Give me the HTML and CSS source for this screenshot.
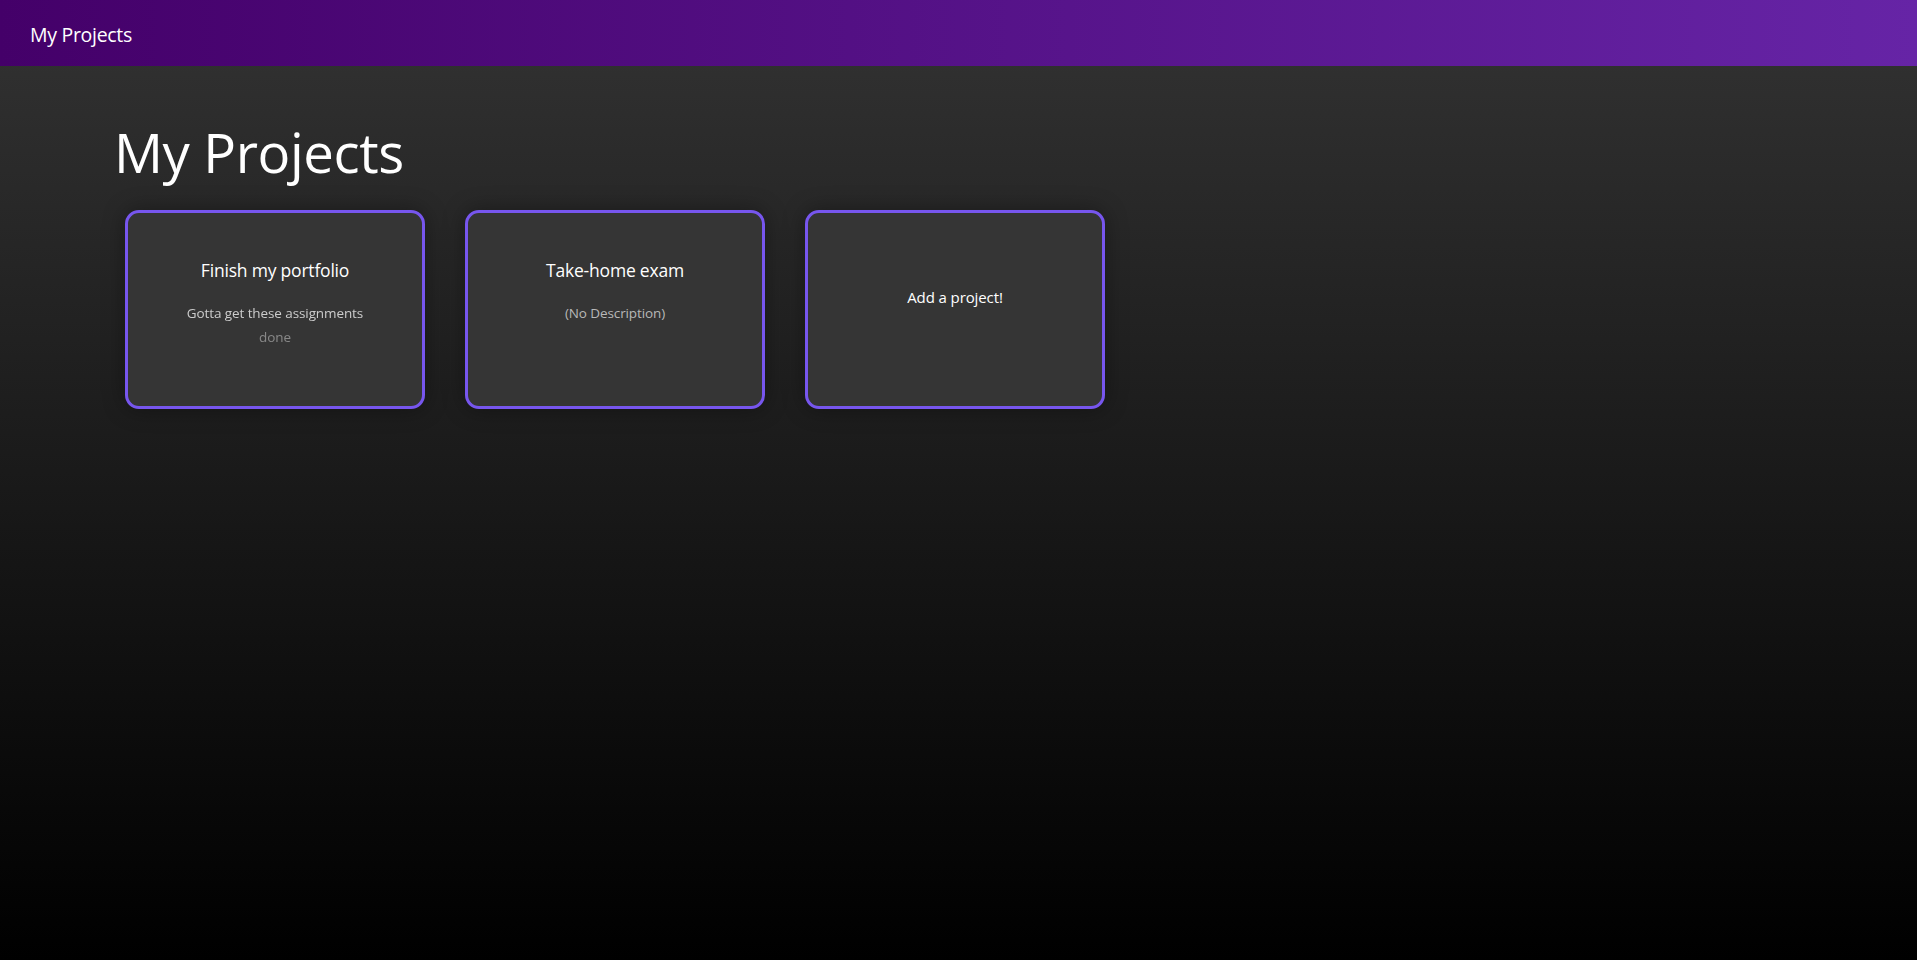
FILE: index.html
```html
<!DOCTYPE html>
<html lang="en">
<head>
<meta charset="utf-8">
<title>My Projects</title>
<link rel="stylesheet" href="styles.css">
</head>
<body>
<header class="navbar">
  <span class="brand">My Projects</span>
</header>
<main class="content">
  <h1 class="page-title">My Projects</h1>
  <div class="cards">
    <div class="card">
      <h2 class="card-title">Finish my portfolio</h2>
      <p class="card-desc fade">Gotta get these assignments done</p>
    </div>
    <div class="card">
      <h2 class="card-title">Take-home exam</h2>
      <p class="card-desc muted">(No Description)</p>
    </div>
    <div class="card card-add">
      <span class="add-text">Add a project!</span>
    </div>
  </div>
</main>
</body>
</html>
```

FILE: styles.css
```css
* { box-sizing: border-box; }
html, body { margin: 0; padding: 0; }
body {
  min-height: 100vh;
  font-family: "Open Sans", "Noto Sans", sans-serif;
  color: #fff;
  background: linear-gradient(to bottom, #333333 0%, #000000 100%);
  background-attachment: fixed;
}
.navbar {
  height: 66px;
  display: flex;
  align-items: center;
  padding-left: 30px;
  padding-top: 2px;
  background: linear-gradient(to right, #440069 0%, #6624a6 100%);
}
.brand {
  font-size: 19.5px;
  color: #fff;
  letter-spacing: -0.3px;
}
.content {
  padding: 54px 0 0 114px;
}
.page-title {
  margin: 0;
  font-size: 54.5px;
  font-weight: 400;
  line-height: 64px;
  letter-spacing: -0.4px;
}
.cards {
  display: flex;
  gap: 40px;
  margin-top: 26px;
  margin-left: 11px;
}
.card {
  width: 300px;
  height: 199px;
  border: 3px solid #7756ee;
  border-radius: 14px;
  background: #353535;
  box-shadow: 0 0 22px rgba(0, 0, 0, 0.35);
  display: flex;
  flex-direction: column;
  align-items: center;
  padding: 45px 40px 0;
  text-align: center;
}
.card-title {
  margin: 0;
  font-size: 17.5px;
  font-weight: 400;
  line-height: 24px;
  letter-spacing: -0.2px;
}
.card-desc {
  margin: 19px 0 0;
  font-size: 13.5px;
  line-height: 24px;
  color: #cccccc;
  width: 205px;
  letter-spacing: -0.1px;
}
.fade {
  -webkit-mask-image: linear-gradient(to bottom, #000 0, #000 24px, rgba(0,0,0,0.55) 30px);
  mask-image: linear-gradient(to bottom, #000 0, #000 24px, rgba(0,0,0,0.55) 30px);
}
.muted { color: #b8b8b8; }
.card-add {
  padding-top: 72px;
}
.add-text {
  font-size: 15px;
  line-height: 24px;
  letter-spacing: -0.1px;
}
```
